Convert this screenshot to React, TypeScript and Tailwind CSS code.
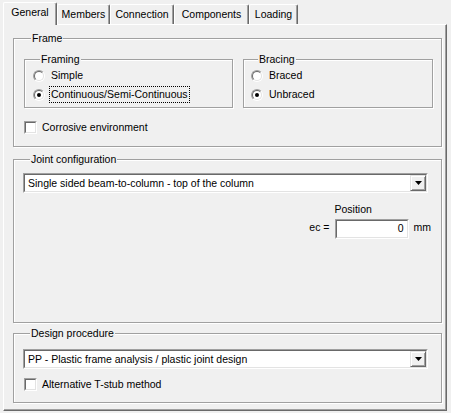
import React from 'react'

const tabs = [
  { label: 'General', w: 'w-[54px]' },
  { label: 'Members', w: 'w-[53px]' },
  { label: 'Connection', w: 'w-[64px]' },
  { label: 'Components', w: 'w-[75px]' },
  { label: 'Loading', w: 'w-[49px]' },
]

function GroupBox({ title, className = '', children }: { title: string; className?: string; children?: React.ReactNode }) {
  return (
    <div className={`border border-[#a0a0a0] shadow-[1px_1px_0_#fff,inset_1px_1px_0_#fff] ${className}`}>
      <div className="-mt-[7px] ml-[7px] h-[13px] w-fit bg-[#f0f0f0] px-px leading-[13px]">{title}</div>
      {children}
    </div>
  )
}

function Radio({ checked }: { checked?: boolean }) {
  return (
    <div className="h-[12px] w-[12px] shrink-0 rounded-full border border-t-[#a0a0a0] border-l-[#a0a0a0] border-r-white border-b-white">
      <div className="flex h-full w-full items-center justify-center rounded-full border border-t-[#696969] border-l-[#696969] border-r-[#e3e3e3] border-b-[#e3e3e3] bg-white">
        {checked && <div className="h-[4px] w-[4px] rounded-full bg-black" />}
      </div>
    </div>
  )
}

function Check() {
  return (
    <div className="h-[13px] w-[13px] shrink-0 border border-t-[#a0a0a0] border-l-[#a0a0a0] border-r-white border-b-white">
      <div className="h-full w-full border border-t-[#696969] border-l-[#696969] border-r-[#e3e3e3] border-b-[#e3e3e3] bg-white" />
    </div>
  )
}

function Combo({ text, className = '' }: { text: string; className?: string }) {
  return (
    <div className={`h-[20px] w-[405px] border border-t-[#a0a0a0] border-l-[#a0a0a0] border-r-white border-b-white ${className}`}>
      <div className="flex h-full w-full items-center border border-t-[#696969] border-l-[#696969] border-r-[#e3e3e3] border-b-[#e3e3e3] bg-white">
        <span className="flex-1 pl-[3px] leading-[13px]">{text}</span>
        <div className="flex h-[16px] w-[16px] items-center justify-center border border-t-[#e3e3e3] border-l-[#e3e3e3] border-r-[#696969] border-b-[#696969] bg-[#f0f0f0] shadow-[inset_1px_1px_0_#fff,inset_-1px_-1px_0_#a0a0a0]">
          <svg width="7" height="4" viewBox="0 0 7 4">
            <path d="M0 0h7L3.5 4z" fill="#000" />
          </svg>
        </div>
      </div>
    </div>
  )
}

export default function App() {
  return (
    <div className="h-[413px] w-[451px] overflow-hidden bg-[#f0f0f0] pt-[2px] text-[10.5px] text-black [font-family:'Liberation_Sans',Arial,sans-serif]">
      <div className="flex h-[22px] items-end pl-[3px]">
        {tabs.map((t, i) => (
          <div
            key={t.label}
            className={`flex items-center justify-center rounded-t-[2px] border-t border-l border-r border-t-white border-l-white border-r-[#696969] bg-[#f0f0f0] shadow-[inset_-1px_0_0_#a0a0a0] ${t.w} ${
              i === 0 ? 'relative z-10 -mb-px h-[23px] pb-[3px]' : 'h-[20px] pt-[1px]'
            }`}
          >
            {t.label}
          </div>
        ))}
      </div>

      <div className="ml-[3px] h-[387px] w-[444px] border border-t-white border-l-white border-r-[#696969] border-b-[#696969] pl-[9px] pt-[13px] shadow-[inset_-1px_-1px_0_#a0a0a0]">
        <GroupBox title="Frame" className="w-[429px] pb-[12px] pl-[10px]">
          <div className="mt-[14px] flex">
            <GroupBox title="Framing" className="w-[209px] pb-[3px] pl-[8px]">
              <div className="flex h-[19px] items-center gap-[6px]">
                <Radio />
                <span>Simple</span>
              </div>
              <div className="flex h-[19px] items-center gap-[5px]">
                <Radio checked />
                <span className="px-px outline outline-1 outline-dotted outline-black">Continuous/Semi-Continuous</span>
              </div>
            </GroupBox>
            <GroupBox title="Bracing" className="ml-[10px] w-[190px] pb-[3px] pl-[7px]">
              <div className="flex h-[19px] items-center gap-[6px]">
                <Radio />
                <span>Braced</span>
              </div>
              <div className="flex h-[19px] items-center gap-[6px]">
                <Radio checked />
                <span>Unbraced</span>
              </div>
            </GroupBox>
          </div>
          <div className="mt-[13px] flex h-[13px] items-center gap-[5px]">
            <Check />
            <span>Corrosive environment</span>
          </div>
        </GroupBox>

        <GroupBox title="Joint configuration" className="mt-[12px] w-[429px] pb-[83px] pl-[9px]">
          <Combo text="Single sided beam-to-column - top of the column" className="mt-[7px]" />
          <div className="mt-[10px] flex items-end justify-end pr-[10px]">
            <span className="mb-[3px] mr-[5px]">ec =</span>
            <div className="flex flex-col">
              <span className="leading-[13px]">Position</span>
              <div className="mt-[3px] h-[20px] w-[74px] border border-t-[#a0a0a0] border-l-[#a0a0a0] border-r-white border-b-white">
                <div className="flex h-full w-full items-center justify-end border border-t-[#696969] border-l-[#696969] border-r-[#e3e3e3] border-b-[#e3e3e3] bg-white pr-[3px]">
                  0
                </div>
              </div>
            </div>
            <span className="mb-[3px] ml-[5px]">mm</span>
          </div>
        </GroupBox>

        <GroupBox title="Design procedure" className="mt-[10px] w-[429px] pb-[11px] pl-[9px]">
          <Combo text="PP - Plastic frame analysis / plastic joint design" className="mt-[9px]" />
          <div className="mt-[9px] flex h-[13px] items-center gap-[5px] pl-px">
            <Check />
            <span>Alternative T-stub method</span>
          </div>
        </GroupBox>
      </div>
    </div>
  )
}
